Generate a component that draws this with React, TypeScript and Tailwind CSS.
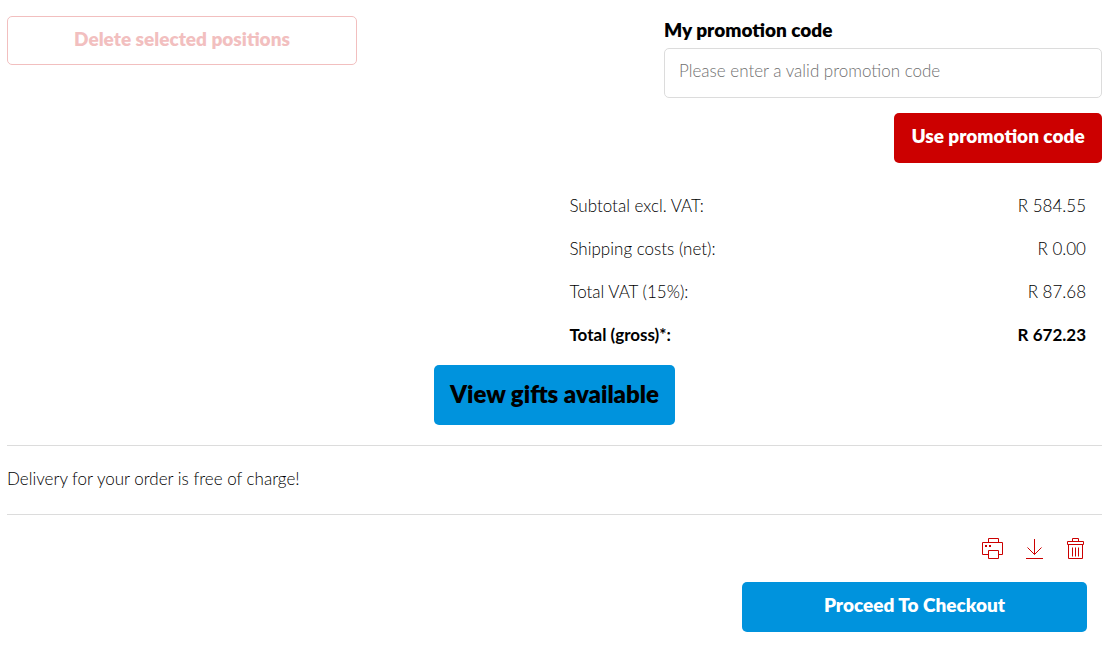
import { useState } from "react";
import type { ReactNode } from "react";

const totals = [
  { label: "Subtotal excl. VAT:", value: "R 584.55" },
  { label: "Shipping costs (net):", value: "R 0.00" },
  { label: "Total VAT (15%):", value: "R 87.68" },
  { label: "Total (gross)*:", value: "R 672.23", strong: true },
];

function IconButton({ label, children }: { label: string; children: ReactNode }) {
  return (
    <button type="button" aria-label={label} className="cursor-pointer text-[#cc0000]">
      <svg
        viewBox="0 0 22 22"
        className="size-[22px]"
        fill="none"
        stroke="currentColor"
        strokeWidth="1"
        aria-hidden="true"
      >
        {children}
      </svg>
    </button>
  );
}

function PromotionForm() {
  const [code, setCode] = useState("");

  return (
    <form className="flex w-2/5 flex-col" onSubmit={(e) => e.preventDefault()}>
      <label htmlFor="promotion-code" className="pb-1 text-[19px] leading-7 font-extrabold">
        My promotion code
      </label>
      <input
        id="promotion-code"
        type="text"
        value={code}
        onChange={(e) => setCode(e.target.value)}
        placeholder="Please enter a valid promotion code"
        className="h-[50px] w-full rounded-[5px] border border-[#dcdcdc] px-[14px] pb-1.5 placeholder:text-[#707070]"
      />
      <button
        type="submit"
        className="mt-[15px] h-[50px] w-[208px] cursor-pointer self-end rounded-[5px] bg-[#cc0000] pb-1 text-[19px] font-extrabold text-white"
      >
        Use promotion code
      </button>
    </form>
  );
}

function OrderTotals() {
  return (
    <table className="mt-[21px] ml-auto w-[49%]">
      <tbody>
        {totals.map((row) => (
          <tr key={row.label} className="h-[43px]">
            <th
              scope="row"
              className={row.strong ? "py-0 pr-0 pl-1 text-left font-bold" : "py-0 pr-0 pl-1 text-left font-light"}
            >
              {row.label}
            </th>
            <td className={row.strong ? "py-0 pr-4 pl-0 text-right font-bold" : "py-0 pr-4 pl-0 text-right"}>
              {row.value}
            </td>
          </tr>
        ))}
      </tbody>
    </table>
  );
}

export default function App() {
  return (
    <main className="flex flex-col bg-white pt-4 pr-[14px] pb-[14px] pl-[7px] font-['Lato','Liberation_Sans',sans-serif] text-[17px] leading-7 font-light text-black">
      <div className="flex items-start justify-between">
        <button
          type="button"
          disabled
          className="h-[49px] w-[350px] rounded-[5px] border border-[#f2bfbf] pb-1 text-[19px] font-extrabold text-[#f2bfbf]"
        >
          Delete selected positions
        </button>
        <PromotionForm />
      </div>

      <OrderTotals />

      <button
        type="button"
        className="mt-[9px] h-[60px] cursor-pointer self-center rounded-[5px] bg-[#0093dd] px-4 pb-0.5 text-2xl font-extrabold"
      >
        View gifts available
      </button>

      <p className="mt-5 border-y border-[#dcdcdc] pt-[19px] pb-[21px]">
        Delivery for your order is free of charge!
      </p>

      <div className="mt-[23px] flex justify-end gap-5 pr-[14px]">
        <IconButton label="Print">
          <path d="M6.5 4.5v-4h10v4" />
          <path d="M6.5 16.5h-6v-12h20v12h-4" />
          <path d="M6.5 12.5h10v8h-10z" />
          <path d="M3 7h2v2H3zM7 7h2v2H7z" fill="currentColor" stroke="none" />
        </IconButton>
        <IconButton label="Download">
          <path d="M10.5 1v15.5M3.5 9.5l7 7 7-7M2 20.5h17" />
        </IconButton>
        <IconButton label="Delete cart">
          <path d="M6.5 3.5v-3h6v3" />
          <path d="M1.5 3.5h16v3h-16z" />
          <path d="M2.5 6.5v14h14v-14" />
          <path d="M6.5 9.5v9M9.5 9.5v9M12.5 9.5v9" />
        </IconButton>
      </div>

      <button
        type="button"
        className="mt-[22px] mr-[15px] h-[50px] w-[345px] cursor-pointer self-end rounded-[5px] bg-[#0093dd] pb-1 text-[19px] font-extrabold text-white"
      >
        Proceed To Checkout
      </button>
    </main>
  );
}
